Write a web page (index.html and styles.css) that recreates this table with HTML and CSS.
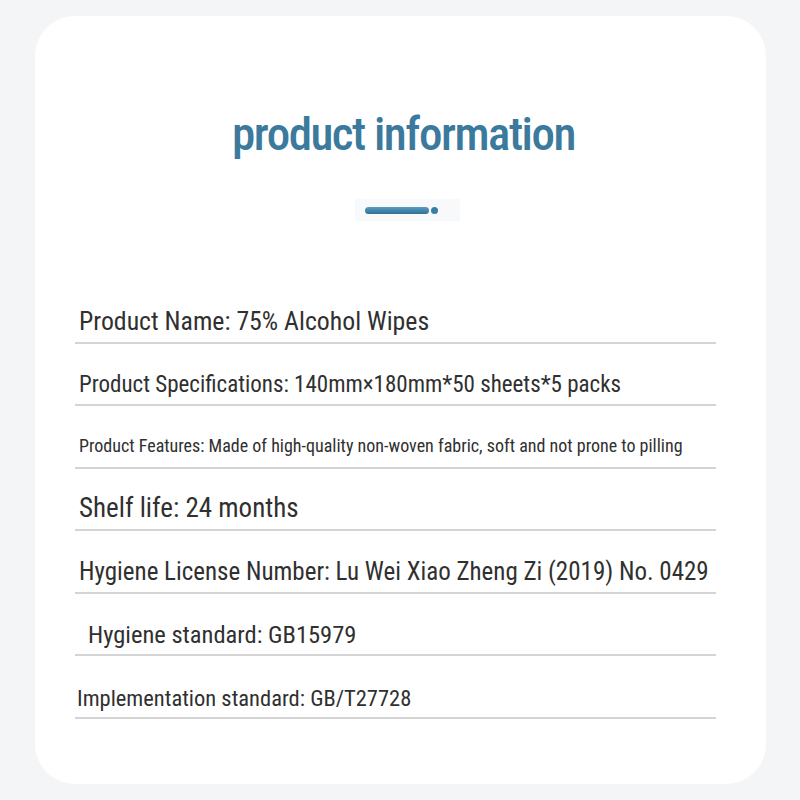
FILE: index.html
```html
<!DOCTYPE html>
<html lang="en">
<head>
<meta charset="utf-8">
<title>product information</title>
<link rel="stylesheet" href="styles.css">
</head>
<body>
<main class="card">
  <h1 class="title">product information</h1>
  <div class="deco"><span class="deco-bar"></span><span class="deco-dot"></span></div>
  <ul class="rows">
    <li class="row s26">Product Name: 75% Alcohol Wipes</li>
    <li class="row s23">Product Specifications: 140mm×180mm*50 sheets*5 packs</li>
    <li class="row s18">Product Features: Made of high-quality non-woven fabric, soft and not prone to pilling</li>
    <li class="row s27">Shelf life: 24 months</li>
    <li class="row s25">Hygiene License Number: Lu Wei Xiao Zheng Zi (2019) No. 0429</li>
    <li class="row s245 indent">Hygiene standard: GB15979</li>
    <li class="row s225 outdent">Implementation standard: GB/T27728</li>
  </ul>
</main>
</body>
</html>
```
FILE: styles.css
```css
html, body {
  margin: 0;
  padding: 0;
}
body {
  background: #f4f5f7;
  padding: 16px 34px 16px 35px;
  font-family: "Roboto Condensed", "Open Sans", sans-serif;
}
.card {
  background: #ffffff;
  border-radius: 40px;
  height: 768px;
  box-sizing: border-box;
  padding-top: 90px;
}
.title {
  margin: 0;
  padding-left: 6px;
  text-align: center;
  font-size: 47px;
  line-height: 56px;
  font-weight: 500;
  color: #3b7a9c;
  letter-spacing: -1.5px;
}
.deco {
  display: flex;
  align-items: center;
  gap: 2px;
  width: 105px;
  height: 22px;
  box-sizing: border-box;
  padding-left: 10px;
  margin: 37px 0 0 calc(50% - 46px);
  background: #f8f9fa;
}
.deco-bar {
  width: 64px;
  height: 7px;
  border-radius: 4px;
  background: linear-gradient(#5b9dc1, #2f7096);
}
.deco-dot {
  width: 7px;
  height: 7px;
  border-radius: 50%;
  background: #3a7ea4;
}
.rows {
  list-style: none;
  margin: 60px 50px 0 40px;
  padding: 0;
}
.row {
  height: 62.5px;
  box-sizing: border-box;
  border-bottom: 2px solid #d4d4d4;
  display: flex;
  align-items: flex-end;
  padding: 0 0 5px 4px;
  color: #303030;
  line-height: 1.2;
  font-weight: 400;
  white-space: nowrap;
}
.s26 { font-size: 25.8px; }
.s23 { font-size: 23px; }
.s18 { font-size: 18px; padding-bottom: 10px; }
.s27 { font-size: 27px; }
.s25 { font-size: 25px; }
.s245 { font-size: 24.5px; }
.s225 { font-size: 22.5px; }
.indent { padding-left: 13px; }
.outdent { padding-left: 2px; }
```
